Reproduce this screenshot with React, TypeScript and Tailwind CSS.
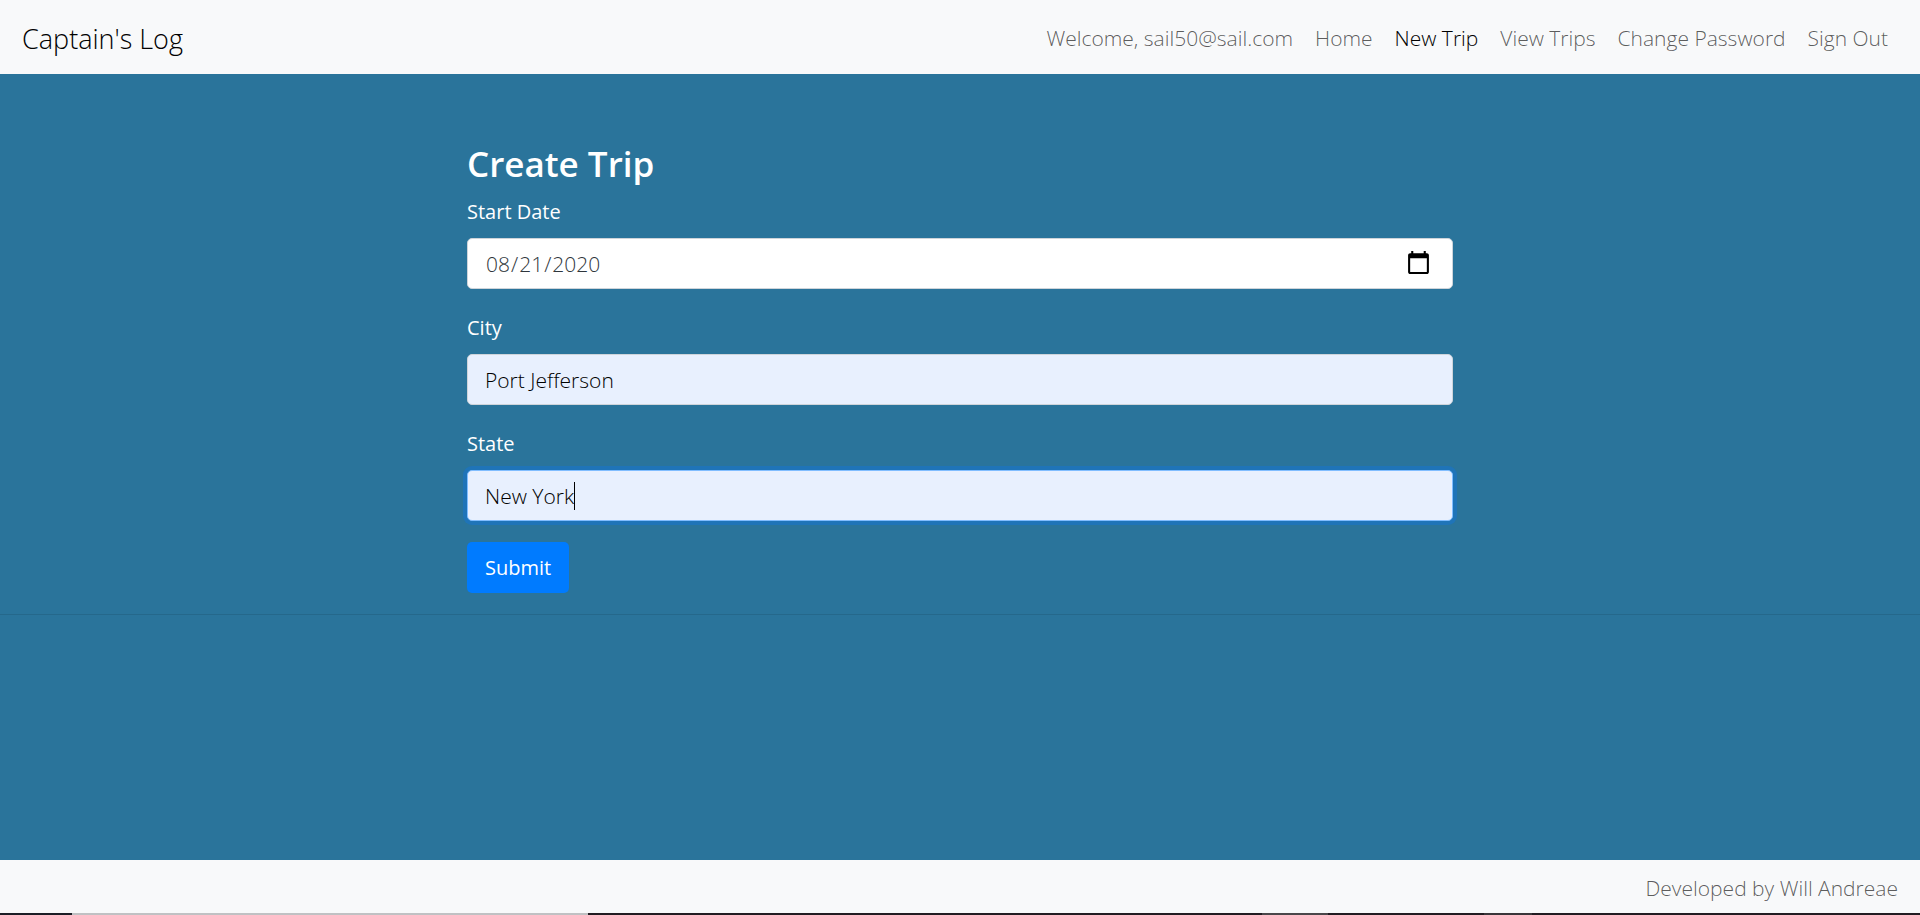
import { useState } from 'react';

const links = ['Home', 'New Trip', 'View Trips', 'Change Password', 'Sign Out'];

const field = 'h-[51px] w-full rounded-[5px] border px-[17px] text-[21px] leading-8 font-light outline-none';
const label = 'mb-[9px] inline-block text-[20px] leading-[34px] text-white';
const picker =
  '[&::-webkit-calendar-picker-indicator]:mr-[3px] [&::-webkit-calendar-picker-indicator]:h-[27px] [&::-webkit-calendar-picker-indicator]:w-[27px] [&::-webkit-calendar-picker-indicator]:bg-contain [&::-webkit-calendar-picker-indicator]:p-0';

export default function App() {
  const [date, setDate] = useState('2020-08-21');
  const [city, setCity] = useState('Port Jefferson');
  const [state, setState] = useState('New York');

  return (
    <div className="flex min-h-screen flex-col bg-[#2a749b] font-['Open_Sans','Noto_Sans',sans-serif]">
      <nav className="flex h-[74px] items-center justify-between bg-[#f8f9fa] pt-1 pr-8 pl-[22px]">
        <a href="#home" className="text-[27px] font-light text-black">Captain's Log</a>
        <div className="flex items-center gap-[22px] text-[21px] font-light text-black/65">
          <span>Welcome, sail50@sail.com</span>
          {links.map((name) => (
            <a key={name} href="#trips" className={name === 'New Trip' ? 'text-black' : ''}>
              {name}
            </a>
          ))}
        </div>
      </nav>

      <main className="flex-1 pt-[67px]">
        <div className="mx-auto max-w-[1539px]">
          <form className="mx-auto w-2/3 px-5" onSubmit={(e) => e.preventDefault()}>
            <h3 className="mb-[9px] text-[35px] leading-[45px] font-semibold text-white">Create Trip</h3>
            <div className="mb-[22px]">
              <label htmlFor="start" className={label}>Start Date</label>
              <input
                id="start"
                type="date"
                value={date}
                onChange={(e) => setDate(e.target.value)}
                className={`${field} ${picker} border-[#ced4da] bg-white text-[#2f363c]`}
              />
            </div>
            <div className="mb-[22px]">
              <label htmlFor="city" className={label}>City</label>
              <input
                id="city"
                value={city}
                onChange={(e) => setCity(e.target.value)}
                className={`${field} border-[#ced4da] bg-[#e8f0fe] text-black`}
              />
            </div>
            <div className="mb-[21px]">
              <label htmlFor="state" className={label}>State</label>
              <div className="relative">
                <input
                  id="state"
                  value={state}
                  onChange={(e) => setState(e.target.value)}
                  className={`${field} border-[#80bdff] bg-[#e8f0fe] text-black caret-transparent ring-4 ring-[#1f74b8]`}
                />
                <span className="absolute top-3 left-[107px] h-7 w-px bg-black" />
              </div>
            </div>
            <button type="submit" className="h-[51px] rounded-[5px] bg-[#007bff] px-[18px] text-[20px] text-white">
              Submit
            </button>
          </form>
        </div>
        <hr className="mt-[21px] border-t border-black/10" />
      </main>

      <footer className="flex h-[53px] items-center justify-end bg-[#f8f9fa] pt-1 pr-[22px] text-[21px] font-light text-black/65">
        Developed by Will Andreae
      </footer>
      <div className="flex h-[2px] bg-[#221c22]">
        <div className="w-[72px] bg-[#1c1e26]" />
        <div className="w-[516px] bg-[#c0c1c3]" />
        <div className="w-[674px]" />
        <div className="w-[66px] bg-[#4a474a]" />
        <div className="w-[156px]" />
        <div className="w-12 bg-[#3a363a]" />
      </div>
    </div>
  );
}
